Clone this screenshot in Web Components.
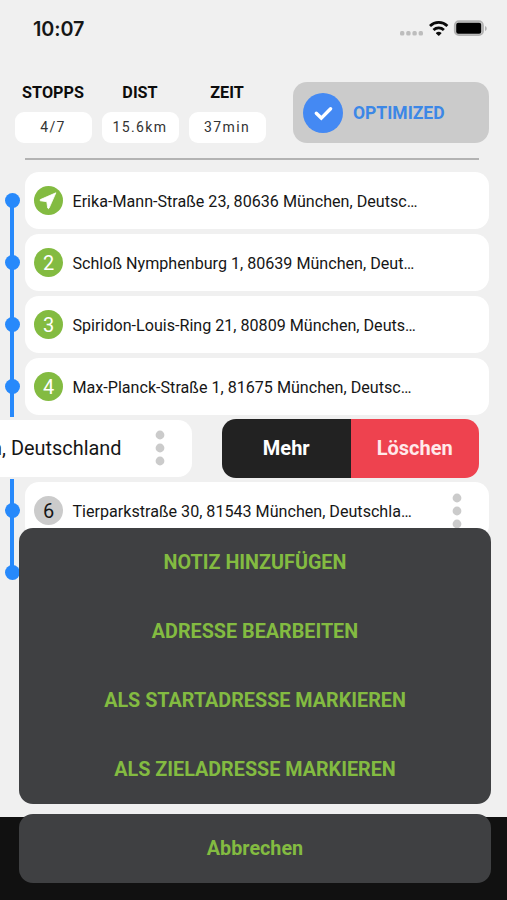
<!DOCTYPE html>
<html lang="de">
<head>
<meta charset="utf-8">
<meta name="viewport" content="width=device-width, initial-scale=1">
<title>Route</title>
<style>
  :root {
    --bg: #f0f0f0;
    --card: #fff;
    --blue: #2789fb;
    --green: #83bb41;
    --grey: #cbcbcb;
    --sheet: #3f4042;
    --ink: #161616;
  }
  body {
    margin: 0;
    background: var(--bg);
    color: var(--ink);
    font-family: Roboto, "Liberation Sans", sans-serif;
  }
</style>
</head>
<body>
<route-screen>
  <status-bar time="10:07"></status-bar>
  <route-summary>
    <stat-pill label="STOPPS">4/7</stat-pill>
    <stat-pill label="DIST">15.6km</stat-pill>
    <stat-pill label="ZEIT">37min</stat-pill>
    <optimized-badge slot="state">OPTIMIZED</optimized-badge>
  </route-summary>
  <stop-row first done badge="nav">Erika-Mann-Straße 23, 80636 München, Deutsc…</stop-row>
  <stop-row done badge="2">Schloß Nymphenburg 1, 80639 München, Deut…</stop-row>
  <stop-row done badge="3">Spiridon-Louis-Ring 21, 80809 München, Deuts…</stop-row>
  <stop-row done badge="4">Max-Planck-Straße 1, 81675 München, Deutsc…</stop-row>
  <swiped-row>München, Deutschland</swiped-row>
  <stop-row menu badge="6">Tierparkstraße 30, 81543 München, Deutschla…</stop-row>
  <stop-row last></stop-row>
  <action-sheet slot="overlay">
    <sheet-action>NOTIZ HINZUFÜGEN</sheet-action>
    <sheet-action>ADRESSE BEARBEITEN</sheet-action>
    <sheet-action>ALS STARTADRESSE MARKIEREN</sheet-action>
    <sheet-action>ALS ZIELADRESSE MARKIEREN</sheet-action>
    <sheet-action slot="cancel">Abbrechen</sheet-action>
  </action-sheet>
</route-screen>

<script>
(() => {
  const define = (name, render) => {
    customElements.define(name, class extends HTMLElement {
      connectedCallback() {
        if (this.shadowRoot) return;
        this.attachShadow({ mode: "open" }).innerHTML = render(this);
      }
    });
  };

  /* three grey dots, shared by the rows that have a context menu */
  const dots = `
    <svg class="dots" width="10" height="36" viewBox="0 0 10 36" fill="#cbcbcb">
      <circle cx="5" cy="5" r="4.4"/><circle cx="5" cy="18" r="4.4"/><circle cx="5" cy="31" r="4.4"/>
    </svg>`;

  define("route-screen", () => `
    <style>
      :host {
        display: flex;
        flex-direction: column;
        position: relative;
        box-sizing: border-box;
        height: 900px;
        overflow: hidden;
      }
      main { flex: 1; min-height: 0; overflow: hidden; }
      footer { flex: none; height: 83.5px; background: #111; }
    </style>
    <main><slot></slot></main>
    <footer></footer>
    <slot name="overlay"></slot>
  `);

  define("status-bar", (el) => `
    <style>
      :host {
        display: flex;
        align-items: center;
        justify-content: space-between;
        box-sizing: border-box;
        height: 58px;
        padding: 0 19px 0 33px;
      }
      time { font: 600 19.8px/24px Inter, sans-serif; letter-spacing: -0.1px; }
      svg { display: block; }
    </style>
    <time>${el.getAttribute("time")}</time>
    <svg width="89" height="20" viewBox="0 0 89 20">
      <g fill="#bdbdbd">
        <rect x="1" y="12.1" width="4.4" height="4.4" rx="1.6"/>
        <rect x="7.2" y="12.1" width="4.4" height="4.4" rx="1.6"/>
        <rect x="13.4" y="12.1" width="4.4" height="4.4" rx="1.6"/>
        <rect x="19.6" y="12.1" width="4.4" height="4.4" rx="1.6"/>
      </g>
      <g fill="none" stroke="#0a0a0a" stroke-width="2.8">
        <path d="M31 6.9a12.6 12.6 0 0 1 17.4 0"/>
        <path d="M34.5 10.9a7.6 7.6 0 0 1 10.4 0"/>
      </g>
      <path d="M37.1 13.7a4.4 4.4 0 0 1 5.2 0q.3.4 0 .8l-2 2q-.6.5-1.2 0l-2-2q-.3-.4 0-.8z" fill="#0a0a0a"/>
      <rect x="55.8" y="2.2" width="28.2" height="14" rx="4.2" fill="#d0d0d0" stroke="#b2b2b2" stroke-width="1.8"/>
      <rect x="57.2" y="3.7" width="25" height="11" rx="2" fill="#000"/>
      <path d="M86 6.9c2.3.8 2.3 4.2 0 5z" fill="#b2b2b2"/>
    </svg>
  `);

  define("route-summary", () => `
    <style>
      :host {
        display: block;
        box-sizing: border-box;
        height: 111px;
        padding: 24px 18px 0 14.5px;
      }
      .top { display: flex; justify-content: space-between; height: 61px; }
      .stats { display: flex; gap: 10px; }
      hr {
        margin: 14.5px 10px 0;
        border: 0;
        height: 2px;
        background: #b3b3b3;
      }
    </style>
    <div class="top">
      <div class="stats"><slot></slot></div>
      <slot name="state"></slot>
    </div>
    <hr>
  `);

  define("stat-pill", (el) => `
    <style>
      :host {
        display: flex;
        flex-direction: column;
        width: 77px;
        text-align: center;
      }
      .label { font-size: 16.2px; font-weight: 700; line-height: 21px; height: 30px; color: #0c0c0c; }
      .value {
        border-radius: 9px;
        background: var(--card);
        color: #333;
        font-size: 14px;
        line-height: 31px;
        letter-spacing: 1.4px;
      }
    </style>
    <div class="label">${el.getAttribute("label")}</div>
    <div class="value"><slot></slot></div>
  `);

  define("optimized-badge", () => `
    <style>
      :host {
        display: flex;
        align-items: center;
        gap: 10px;
        box-sizing: border-box;
        width: 196px;
        height: 61px;
        padding-left: 10px;
        border-radius: 14px;
        background: var(--grey);
        color: #3c87e6;
        font-size: 17.5px;
        font-weight: 700;
      }
    </style>
    <svg width="40" height="40" viewBox="0 0 40 40">
      <circle cx="20" cy="20" r="20" fill="#4489f3"/>
      <path d="M13.3 20.3l5 4.8L27.6 15.8" fill="none" stroke="#fff" stroke-width="3.4" stroke-linecap="round" stroke-linejoin="miter"/>
    </svg>
    <span><slot></slot></span>
  `);

  /* one stop: timeline rail on the left, address card on the right */
  define("stop-row", (el) => {
    const badge = el.getAttribute("badge");
    const mark = badge === "nav"
      ? `<svg width="29" height="29" viewBox="0 0 29 29"><path d="M21.9 6.8L6.3 13.6q-.9.7.2 1.2l6.3.9.9 6.3q.6 1.2 1.4.1z" fill="#fff" stroke="#fff" stroke-width=".8" stroke-linejoin="round"/></svg>`
      : badge;
    return `
    <style>
      :host { display: flex; height: 62px; }
      .rail {
        flex: none;
        display: flex;
        align-items: center;
        justify-content: center;
        width: 24px;
        height: 62px;
        background: linear-gradient(var(--blue), var(--blue)) center / 4px 100% no-repeat;
      }
      :host([first]) .rail { background-size: 4px 50%; background-position: center bottom; }
      :host([last]) .rail { background-size: 4px 50%; background-position: center top; }
      .dot { width: 15px; height: 15px; border-radius: 50%; background: var(--blue); }
      .card {
        flex: 1;
        display: flex;
        align-items: center;
        box-sizing: border-box;
        height: 57px;
        margin: 3px 18px 0 .5px;
        padding: 0 27px 0 9.5px;
        border-radius: 14px;
        background: var(--card);
      }
      .badge {
        flex: none;
        display: flex;
        align-items: center;
        justify-content: center;
        width: 29px;
        height: 29px;
        margin-right: 9.5px;
        border-radius: 50%;
        background: var(--grey);
        font-size: 20px;
      }
      :host([done]) .badge { background: var(--green); color: #fff; }
      .text {
        flex: 1;
        font-size: 16.12px;
        line-height: 20px;
        padding-top: 2px;
        white-space: nowrap;
      }
    </style>
    <div class="rail"><div class="dot"></div></div>
    ${badge ? `<div class="card">
      <div class="badge">${mark}</div>
      <div class="text"><slot></slot></div>
      ${el.hasAttribute("menu") ? dots : ""}
    </div>` : ""}`;
  });

  /* the row dragged to the left, with its actions uncovered */
  define("swiped-row", () => `
    <style>
      :host {
        display: flex;
        align-items: center;
        justify-content: space-between;
        box-sizing: border-box;
        height: 62px;
        padding-right: 28px;
      }
      .card {
        display: flex;
        align-items: center;
        justify-content: flex-end;
        gap: 33.5px;
        box-sizing: border-box;
        width: 192px;
        height: 57px;
        padding-right: 27px;
        overflow: hidden;
        border-radius: 0 14px 14px 0;
        background: var(--card);
        font-size: 19.9px;
        white-space: nowrap;
      }
      .dots { flex: none; }
      .actions {
        display: flex;
        width: 257px;
        height: 59px;
        overflow: hidden;
        border-radius: 14px;
        color: #fff;
        font-size: 20px;
        font-weight: 700;
        line-height: 59px;
        text-align: center;
      }
      .actions > * { flex: 1; }
      .more { background: #222; }
      .delete { background: #ee424f; color: #ffe9ea; }
    </style>
    <div class="card"><span><slot></slot></span>${dots}</div>
    <div class="actions">
      <div class="more">Mehr</div>
      <div class="delete">Löschen</div>
    </div>
  `);

  define("action-sheet", () => `
    <style>
      :host {
        position: absolute;
        left: 19px;
        right: 16px;
        bottom: 17px;
        display: flex;
        flex-direction: column;
        gap: 10px;
      }
      .group { border-radius: 14px; background: var(--sheet); }
    </style>
    <div class="group"><slot></slot></div>
    <div class="group"><slot name="cancel"></slot></div>
  `);

  define("sheet-action", () => `
    <style>
      :host {
        display: block;
        height: 69px;
        color: var(--green);
        font-size: 19.75px;
        font-weight: 700;
        line-height: 69px;
        text-align: center;
      }
    </style>
    <slot></slot>
  `);
})();
</script>
</body>
</html>
